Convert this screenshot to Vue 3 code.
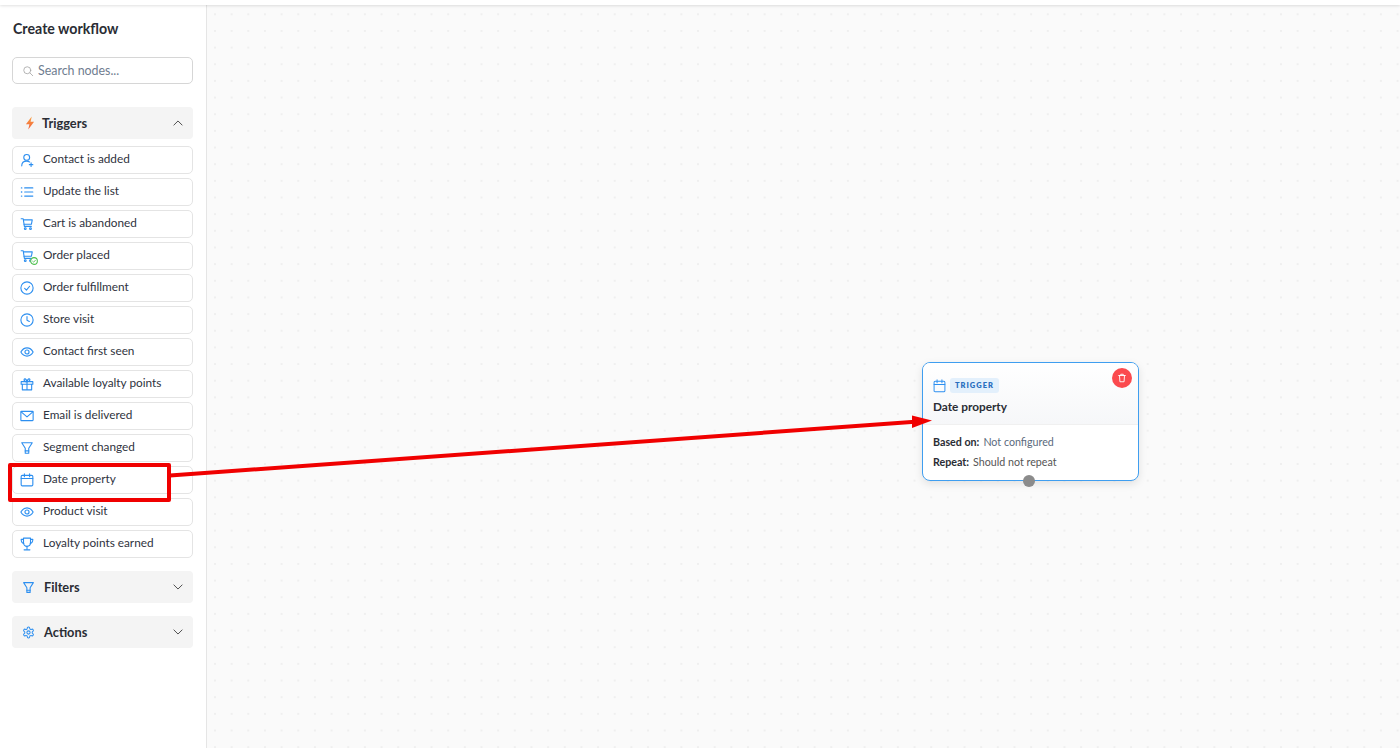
<script setup>
const triggers = [
  { label: 'Contact is added', icon: 'user' },
  { label: 'Update the list', icon: 'list' },
  { label: 'Cart is abandoned', icon: 'cart' },
  { label: 'Order placed', icon: 'cartok' },
  { label: 'Order fulfillment', icon: 'check' },
  { label: 'Store visit', icon: 'clock' },
  { label: 'Contact first seen', icon: 'eye' },
  { label: 'Available loyalty points', icon: 'gift' },
  { label: 'Email is delivered', icon: 'mail' },
  { label: 'Segment changed', icon: 'filter' },
  { label: 'Date property', icon: 'calendar' },
  { label: 'Product visit', icon: 'eye' },
  { label: 'Loyalty points earned', icon: 'trophy' },
]
</script>

<template>
  <div class="page">
    <div class="topbar"></div>
    <div class="main">
      <aside class="side">
        <h1 class="title">Create workflow</h1>
        <label class="search">
          <svg class="search-ic" viewBox="0 0 24 24" fill="none" stroke="#a3a3a3" stroke-width="1.6" stroke-linecap="round"><circle cx="10.5" cy="10.5" r="7"/><path d="m16 16 5.5 5.5"/></svg>
          <span>Search nodes...</span>
        </label>

        <div class="group-head first">
          <svg class="bolt" viewBox="0 0 24 24"><defs><linearGradient id="b" x1="0" y1="0" x2="0" y2="1"><stop offset="0" stop-color="#f9a03f"/><stop offset="1" stop-color="#f2603c"/></linearGradient></defs><path fill="url(#b)" d="M15 1 5 14h6l-2 9 10-13h-6z"/></svg>
          <span class="gh-label t-label">Triggers</span>
          <svg class="chev" viewBox="0 0 24 24" fill="none" stroke="#444" stroke-width="1.6" stroke-linecap="round" stroke-linejoin="round"><path d="m5 15.500 7-7 7 7"/></svg>
        </div>

        <ul class="items">
          <li v-for="t in triggers" :key="t.label" class="item">
            <svg class="ic" viewBox="0 0 24 24" fill="none" stroke="#2d8ff0" stroke-width="1.9" stroke-linecap="round" stroke-linejoin="round">
              <template v-if="t.icon === 'user'"><circle cx="11.5" cy="7.5" r="5"/><path d="M3 22c0-5 3.500-8 8.500-8 2 0 3.500.4 5 1.300"/><path d="M19 17v6M16 20h6"/></template>
              <template v-else-if="t.icon === 'list'"><path d="M8 5h14M8 12h14M8 19h14"/><path d="M2.500 5h.5M2.500 12h.5M2.500 19h.5" stroke-width="2.400"/></template>
              <template v-else-if="t.icon === 'cart' || t.icon === 'cartok'"><path d="M2 3h3.500l2 13h12"/><path d="M6 5h15l-1.500 7.500H7"/><circle cx="9" cy="20" r="1.500"/><circle cx="18" cy="20" r="1.500"/></template>
              <template v-else-if="t.icon === 'check'"><circle cx="12" cy="12" r="10.500"/><path d="m8 12.500 3 3 5.500-6.500"/></template>
              <template v-else-if="t.icon === 'clock'"><circle cx="12" cy="12" r="10.500"/><path d="M12 6v6.500l4 2"/></template>
              <template v-else-if="t.icon === 'eye'"><path d="M1.500 12C4 7.500 7.500 5 12 5s8 2.500 10.500 7c-2.500 4.500-6 7-10.500 7S4 16.500 1.500 12z"/><circle cx="12" cy="12" r="3.500"/></template>
              <template v-else-if="t.icon === 'gift'"><rect x="2" y="8" width="20" height="4.500"/><path d="M4 12.500V22h16v-9.500M12 8v14"/><path d="M12 8C9 8 7 6.500 7 4.500S10.500 2 12 8c1.500-6 5-5.500 5-3.500S15 8 12 8z"/></template>
              <template v-else-if="t.icon === 'mail'"><rect x="1.500" y="4" width="21" height="16" rx="1"/><path d="m2 5 10 8.500L22 5"/></template>
              <template v-else-if="t.icon === 'filter'"><path d="M3 3h18l-6 9.500V21H9v-8.500z"/><path d="M9 17h6"/></template>
              <template v-else-if="t.icon === 'calendar'"><rect x="2" y="4" width="20" height="18" rx="2"/><path d="M2 9.500h20M7.500 1.500v5M16.500 1.500v5"/></template>
              <template v-else-if="t.icon === 'trophy'"><path d="M6 2h12v8a6 6 0 0 1-12 0z"/><path d="M6 4H2c0 4 1.500 6.500 4.500 7M18 4h4c0 4-1.500 6.500-4.500 7"/><path d="M12 16v4M7 22h10"/></template>
            </svg>
            <svg v-if="t.icon === 'cartok'" class="ok" viewBox="0 0 10 10"><circle cx="5" cy="5" r="4.200" fill="#fff" stroke="#4cc04c" stroke-width="1.300"/><path d="m3 5 1.500 1.500L7 3.800" fill="none" stroke="#4cc04c" stroke-width="1.100"/></svg>
            <span class="item-label">{{ t.label }}</span>
          </li>
        </ul>

        <div class="group-head">
          <svg class="gh-ic" viewBox="0 0 24 24" fill="none" stroke="#2d8ff0" stroke-width="2" stroke-linecap="round" stroke-linejoin="round"><path d="M3 3h18l-6 9.500V21H9v-8.500z"/><path d="M9 17h6"/></svg>
          <span class="gh-label">Filters</span>
          <svg class="chev" viewBox="0 0 24 24" fill="none" stroke="#444" stroke-width="1.600" stroke-linecap="round" stroke-linejoin="round"><path d="m5 8.500 7 7 7-7"/></svg>
        </div>
        <div class="group-head">
          <svg class="gh-ic" viewBox="0 0 24 24" fill="none" stroke="#2d8ff0" stroke-width="1.900" stroke-linecap="round" stroke-linejoin="round"><path d="M12.220 2h-.44a2 2 0 0 0-2 2v.18a2 2 0 0 1-1 1.730l-.43.25a2 2 0 0 1-2 0l-.15-.08a2 2 0 0 0-2.730.73l-.22.38a2 2 0 0 0 .73 2.730l.15.1a2 2 0 0 1 1 1.720v.51a2 2 0 0 1-1 1.740l-.15.09a2 2 0 0 0-.73 2.730l.22.38a2 2 0 0 0 2.730.73l.15-.08a2 2 0 0 1 2 0l.43.25a2 2 0 0 1 1 1.730V20a2 2 0 0 0 2 2h.44a2 2 0 0 0 2-2v-.18a2 2 0 0 1 1-1.730l.43-.25a2 2 0 0 1 2 0l.15.08a2 2 0 0 0 2.730-.73l.22-.39a2 2 0 0 0-.73-2.730l-.15-.08a2 2 0 0 1-1-1.740v-.5a2 2 0 0 1 1-1.740l.15-.09a2 2 0 0 0 .73-2.730l-.22-.38a2 2 0 0 0-2.730-.73l-.15.08a2 2 0 0 1-2 0l-.43-.25a2 2 0 0 1-1-1.730V4a2 2 0 0 0-2-2z"/><circle cx="12" cy="12" r="3"/></svg>
          <span class="gh-label">Actions</span>
          <svg class="chev" viewBox="0 0 24 24" fill="none" stroke="#444" stroke-width="1.600" stroke-linecap="round" stroke-linejoin="round"><path d="m5 8.500 7 7 7-7"/></svg>
        </div>
      </aside>

      <section class="canvas">
        <div class="node">
          <div class="node-head">
            <div class="node-tag">
              <svg class="node-ic" viewBox="0 0 24 24" fill="none" stroke="#2d8ff0" stroke-width="1.800" stroke-linecap="round" preserveAspectRatio="none"><rect x="2" y="4" width="20" height="18" rx="2"/><path d="M2 9.500h20M7.500 1.500v5M16.500 1.500v5"/></svg>
              <span class="tag">TRIGGER</span>
            </div>
            <div class="node-title">Date property</div>
            <button class="del">
              <svg viewBox="0 0 24 24" fill="none" stroke="#fff" stroke-width="2.200" stroke-linecap="round" stroke-linejoin="round"><path d="M4 6h16M9 6V3h6v3M6 6l1 15h10l1-15"/></svg>
            </button>
          </div>
          <div class="node-body">
            <div class="row"><b>Based on:</b><span class="nc">Not configured</span></div>
            <div class="row"><b>Repeat:</b><span>Should not repeat</span></div>
          </div>
          <i class="handle"></i>
        </div>
      </section>
    </div>

    <div class="mark"></div>
    <svg class="arrow" width="1400" height="748" viewBox="0 0 1400 748">
      <path d="M170 475.500 915 421.800" stroke="#f00000" stroke-width="4" fill="none"/>
      <path d="M932 420.500 912 415.500 912 428z" fill="#f00000"/>
    </svg>
  </div>
</template>

<style>
html, body { margin: 0; background: #fff; }
</style>

<style scoped>
.page { position: relative; width: 1400px; height: 748px; overflow: hidden; display: flex; flex-direction: column; font-family: Lato, "Liberation Sans", sans-serif; color: #2b2f38; background: #fff; }
.topbar { height: 5px; flex: none; background: #fff; box-shadow: 0 1px 3px rgba(0,0,0,.12); position: relative; z-index: 2; }
.main { flex: 1; display: flex; min-height: 0; }
.side { width: 207px; flex: none; box-sizing: border-box; border-right: 1px solid #e5e5e5; padding: 0 13px 0 12px; background: #fff; }
.title { margin: 15px 0 0 1px; font-size: 14.2px; line-height: 18px; font-weight: 700; color: #2a2d34; }
.search { margin-top: 19px; height: 27px; box-sizing: border-box; border: 1px solid #d6d6d6; border-radius: 5px; display: flex; align-items: center; padding-left: 9px; gap: 4px; font-size: 12.4px; color: #6f7d90; }
.search-ic { width: 12px; height: 12px; }
.group-head { margin-top: 13px; height: 32px; border-radius: 4px; background: #f4f4f4; display: flex; align-items: center; padding: 0 8px 0 10px; }
.group-head.first { margin-top: 23px; padding-left: 11px; }
.bolt { width: 14px; height: 14px; flex: none; }
.gh-ic { width: 13px; height: 13px; flex: none; }
.gh-label { margin-left: 9px; flex: 1; font-size: 12.8px; font-weight: 700; color: #2a2d34; }
.t-label { margin-left: 5px; padding-bottom: 1px; }
.chev { width: 14px; height: 14px; flex: none; }
.items { list-style: none; margin: 7px 0 13px; padding: 0; display: flex; flex-direction: column; gap: 4px; }
.item { position: relative; height: 28px; box-sizing: border-box; border: 1px solid #e4e4e4; border-radius: 5px; display: flex; align-items: center; padding-left: 7px; gap: 9px; font-size: 11.8px; color: #2f3340; background: #fff; }
.item-label { padding-bottom: 4px; }
.ic { width: 14px; height: 14px; flex: none; }
.ok { position: absolute; left: 17px; top: 14px; width: 8px; height: 8px; }
.canvas { flex: 1; position: relative; background-color: #fafafa; background-image: radial-gradient(circle at 1px 1px, #efefef .8px, transparent 1px); background-size: 16.67px 16.67px; background-position: 7px 8.300px; }
.node { position: absolute; left: 715px; top: 357px; width: 217px; height: 119px; box-sizing: border-box; border: 1px solid #3f9ef0; border-radius: 8px; background: #fff; box-shadow: 0 3px 8px rgba(0,0,0,.10); }
.node-head { position: relative; height: 62px; box-sizing: border-box; padding: 15px 10px 0; border-bottom: 1px solid #f0f0f0; border-radius: 7px 7px 0 0; background: linear-gradient(#fff, #f6f7f9); }
.node-tag { display: flex; align-items: center; gap: 4px; }
.node-ic { width: 13px; height: 14px; }
.tag { background: #e3f0fc; color: #2a6fc0; font-size: 7.5px; font-weight: 800; letter-spacing: 1px; padding: 2px 5px; border-radius: 3px; line-height: 11px; }
.node-title { margin-top: 6px; font-size: 11.8px; font-weight: 700; color: #2a2d34; line-height: 15px; }
.del { position: absolute; top: 5px; right: 6px; width: 20px; height: 20px; padding: 5px; border: 0; border-radius: 50%; background: #fb4a4e; display: flex; }
.del svg { width: 10px; height: 10px; }
.node-body { padding: 10px 10px 0; display: flex; flex-direction: column; gap: 6px; }
.row { display: flex; gap: 4px; font-size: 10.7px; line-height: 14px; color: #555; }
.row b { color: #2a2d34; font-weight: 700; }
.nc { color: #5a6a7d; }
.handle { position: absolute; left: 100px; bottom: -7px; width: 12px; height: 12px; border-radius: 50%; background: #8b8b8b; }
.mark { position: absolute; left: 8px; top: 463px; width: 163px; height: 39px; box-sizing: border-box; border: 4px solid #f00000; border-radius: 2px; }
.arrow { position: absolute; left: 0; top: 0; pointer-events: none; }
</style>
